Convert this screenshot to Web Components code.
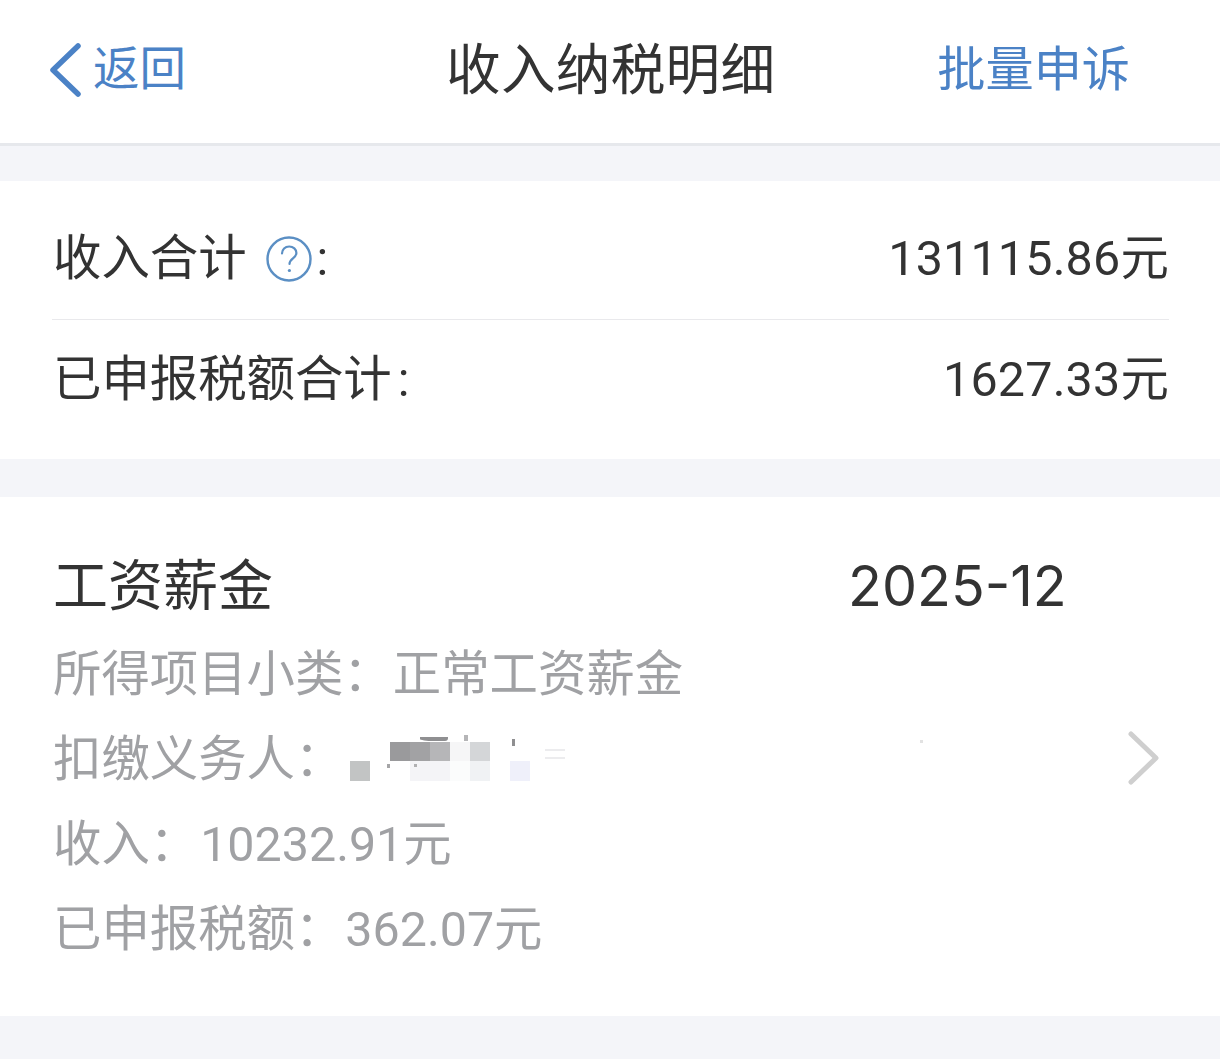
<!DOCTYPE html>
<html lang="zh-CN"><head><meta charset="utf-8">
<style>
html,body{margin:0;padding:0;background:#f4f5f9;}
body{width:1220px;height:1059px;overflow:hidden;font-family:Roboto,"Noto Sans CJK SC",sans-serif;}
</style></head><body>
<app-nav title-text="收入纳税明细" back="返回" action="批量申诉"></app-nav>
<sum-card>
  <sum-row value="131115.86元">收入合计<help-icon></help-icon>:</sum-row>
  <sum-row value="1627.33元" last>已申报税额合计<colon-mark></colon-mark></sum-row>
</sum-card>
<income-card title-text="工资薪金" date="2025-12">
  <detail-line label="所得项目小类：" value="正常工资薪金" gap="1"></detail-line>
  <detail-line label="扣缴义务人："><mosaic-blur></mosaic-blur></detail-line>
  <detail-line label="收入：" value="10232.91元" gap="2"></detail-line>
  <detail-line label="已申报税额：" value="362.07元" gap="2"></detail-line>
</income-card>
<script>
function def(name, html){
  customElements.define(name, class extends HTMLElement{
    connectedCallback(){
      if(this.shadowRoot) return;
      const r=this.attachShadow({mode:'open'});
      r.innerHTML=typeof html==='function'?html(this):html;
    }
  });
}
def('app-nav', e=>`<style>
:host{display:grid;grid-template-columns:399px auto 1fr;align-items:center;height:143px;background:#fff;border-bottom:3px solid #e6e8ec;padding:0 90px 0 49px;}
.back{display:flex;align-items:center;gap:10px;color:#4b82c6;font-size:46.5px;line-height:1;margin-top:-4px}
.t{font-size:54.6px;color:#333;line-height:1;margin-top:-3px;margin-left:-2px;width:327px;letter-spacing:.3px;white-space:nowrap}
.a{justify-self:end;font-size:48.2px;color:#4b82c6;line-height:1;margin-top:-3px;white-space:nowrap}
svg{display:block;flex:none}
</style>
<div class="back"><svg width="34" height="54" viewBox="0 0 34 54"><path d="M29 3 4 27l25 24" fill="none" stroke="#4b82c6" stroke-width="5.5" stroke-linecap="round" stroke-linejoin="round"/></svg><span>${e.getAttribute('back')}</span></div>
<div class="t">${e.getAttribute('title-text')}</div>
<div class="a">${e.getAttribute('action')}</div>`);
def('sum-card', `<style>:host{display:block;background:#fff;margin-top:35px;padding:18px 51px 18px 52px;}</style><slot></slot>`);
def('sum-row', e=>`<style>
:host{display:flex;justify-content:space-between;align-items:center;height:121px;color:#333;font-size:48.4px;line-height:1;box-sizing:border-box;${e.hasAttribute('last')?'':'border-bottom:1px solid #e9e9ec;'}}
.l{padding-left:1px;display:flex;align-items:center;white-space:nowrap}
.v{white-space:nowrap;letter-spacing:.2px}
</style><div class="l"><slot></slot></div><div class="v">${e.getAttribute('value')}</div>`);
def('colon-mark', `<style>:host{display:inline-block;margin-left:6px}</style>:`);
def('help-icon', `<style>:host{display:inline-flex;margin:0 4px 0 18px}svg{display:block}</style>
<svg width="48" height="48" viewBox="0 0 48 48"><circle cx="24" cy="24" r="21.5" fill="none" stroke="#5b8fc4" stroke-width="2.4"/><path d="M17 18.5c0-4.2 3.1-7 7.2-7s7.2 2.7 7.2 6.4c0 5.3-6.9 5.6-6.9 11" fill="none" stroke="#5b8fc4" stroke-width="2.2" stroke-linecap="round"/><circle cx="24.4" cy="35.5" r="1.6" fill="#5b8fc4"/></svg>`);
def('income-card', e=>`<style>
:host{display:block;background:#fff;margin-top:38px;height:519px;box-sizing:border-box;padding:54px 0 0 53px;position:relative}
.h{display:grid;grid-template-columns:795px auto;align-items:center;height:70px;color:#333;font-size:55px;line-height:1}
.d{font-family:Inter,Roboto,sans-serif;font-size:55.6px}
.b{margin-top:12px;display:flex;flex-direction:column}
.c{position:absolute;right:61px;top:234px}
svg{display:block}
</style><div class="h"><div>${e.getAttribute('title-text')}</div><div class="d">${e.getAttribute('date')}</div></div>
<div class="b"><slot></slot></div>
<svg class="c" width="32" height="54" viewBox="0 0 32 54"><path d="M4 3l25 24L4 51" fill="none" stroke="#cfcfcf" stroke-width="5" stroke-linecap="round" stroke-linejoin="round"/></svg>`);
def('detail-line', e=>`<style>
:host{display:flex;align-items:center;height:85px;color:#a0a1a4;font-size:48.4px;line-height:1;white-space:nowrap}
.v{margin-left:${e.getAttribute('gap')||0}px}
</style><span>${e.getAttribute('label')}</span><span class="v">${e.getAttribute('value')||''}<slot></slot></span>`);
def('mosaic-blur', `<style>
:host{display:grid;grid-template-columns:repeat(11,20px);grid-template-rows:19px 20px;margin-left:7px;margin-top:2px;position:relative}
i{display:block}
b{position:absolute;display:block}
</style>
<i></i><i></i><i style="background:#9a9a9c"></i><i style="background:#a2a2a4"></i><i style="background:#b6b6b8"></i><i style="background:#f6f6f7"></i><i style="background:#d4d6d8"></i><i></i><i></i><i></i><i></i>
<i style="background:#c2c4c4"></i><i></i><i></i><i style="background:#f4f4f7"></i><i style="background:#f4f4f7"></i><i style="background:#fbfcfc"></i><i style="background:#f0f2f4"></i><i></i><i style="background:#eff0fa"></i><i></i><i></i>
<b style="left:70px;top:-5px;width:28px;height:4px;background:#8f8f91;border-radius:0 0 3px 50%"></b>
<b style="left:114px;top:-7px;width:4px;height:6px;background:#b5b5b7"></b>
<b style="left:162px;top:-3px;width:3px;height:7px;background:#8f8f91"></b>
<b style="left:64px;top:22px;width:3px;height:3px;background:#b0b0b2"></b>
<b style="left:37px;top:22px;width:3px;height:4px;background:#a5a5a7"></b>
<b style="left:195px;top:7px;width:20px;height:2px;background:#ececee"></b>
<b style="left:195px;top:15px;width:20px;height:2px;background:#ececee"></b>
<b style="left:570px;top:-2px;width:3px;height:3px;background:#e2e2e2"></b>`);
</script>
</body></html>
